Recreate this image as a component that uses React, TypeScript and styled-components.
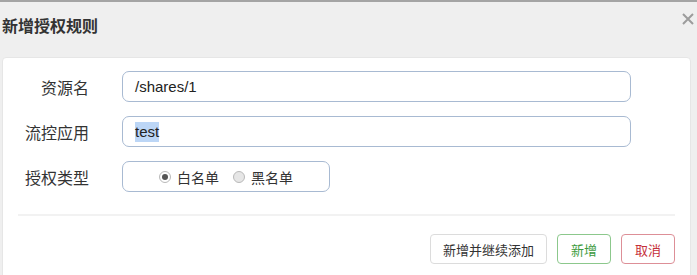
import React from "react";
import styled, { createGlobalStyle } from "styled-components";

const Global = createGlobalStyle`
  html, body { margin: 0; padding: 0; background: #efefef; }
  body { font-family: "Liberation Sans", "Noto Sans CJK SC", sans-serif; color: #333; }
`;

const Modal = styled.div`
  width: 697px;
  height: 275px;
  overflow: hidden;
  box-sizing: border-box;
  border-top: 2px solid #a4a4a4;
  background: #efefef;
`;

const Header = styled.div`
  height: 55px;
  display: flex;
  align-items: flex-start;
  justify-content: space-between;
  padding: 11px 3px 0 2px;
  box-sizing: border-box;
`;

const Title = styled.h4`
  margin: 0;
  font-size: 16px;
  line-height: 24px;
  font-weight: 600;
  color: #333;
  font-family: "Noto Sans CJK SC", sans-serif;
`;

const Close = styled.button`
  border: none;
  background: none;
  padding: 0;
  width: 12px;
  height: 12px;
  margin-top: 0;
  display: flex;
  cursor: pointer;
`;

const Panel = styled.div`
  margin-left: 2px;
  width: 689px;
  height: 240px;
  box-sizing: border-box;
  background: #fff;
  border: 1px solid #e6e6e6;
  border-radius: 4px;
  padding-top: 13px;
`;

const Row = styled.div`
  display: flex;
  align-items: center;
  margin-bottom: 14px;
`;

const Label = styled.label`
  width: 86px;
  text-align: right;
  font-family: "Noto Sans CJK SC", sans-serif;
  font-size: 16px;
  color: #333;
  margin-right: 33px;
`;

const Field = styled.div<{ $width: number; $center?: boolean }>`
  width: ${(p) => p.$width}px;
  height: 31px;
  box-sizing: border-box;
  border: 1px solid #a8bad2;
  border-radius: 7px;
  display: flex;
  align-items: center;
  justify-content: ${(p) => (p.$center ? "center" : "flex-start")};
  padding-left: ${(p) => (p.$center ? 0 : 12)}px;
  font-size: 15px;
  color: #222;
  background: #fff;
`;

const Selected = styled.span`
  background: #bcd6f6;
  line-height: 20px;
`;

const RadioItem = styled.span`
  display: inline-flex;
  align-items: center;
  font-family: "Noto Sans CJK SC", sans-serif;
  font-size: 14px;
  color: #333;
  & + & { margin-left: 14px; }
`;

const Dot = styled.span<{ $checked?: boolean }>`
  width: 12px;
  height: 12px;
  border-radius: 50%;
  box-sizing: border-box;
  border: 1px solid #b9b9b9;
  background: ${(p) => (p.$checked ? "#fff" : "#e6e6e6")};
  margin-right: 6px;
  display: inline-flex;
  align-items: center;
  justify-content: center;
  &::after {
    content: "";
    width: 6px;
    height: 6px;
    border-radius: 50%;
    background: ${(p) => (p.$checked ? "#555" : "transparent")};
  }
`;

const Divider = styled.div`
  margin: 22px 15px 0 15px;
  height: 2px;
  background: #f2f2f2;
`;

const Footer = styled.div`
  display: flex;
  justify-content: flex-end;
  gap: 10px;
  padding: 18px 15px 0 0;
`;

const Btn = styled.button<{ $tone: "default" | "ok" | "cancel" }>`
  height: 30px;
  padding: 0 12px;
  box-sizing: border-box;
  border-radius: 4px;
  background: #fff;
  font-family: "Noto Sans CJK SC", sans-serif;
  font-size: 13px;
  border: 1px solid
    ${(p) => (p.$tone === "ok" ? "#8cc88c" : p.$tone === "cancel" ? "#dd8f97" : "#dcdcdc")};
  color: ${(p) => (p.$tone === "ok" ? "#3d9b3d" : p.$tone === "cancel" ? "#c62f3a" : "#333")};
  min-width: 54px;
`;

export default function App() {
  return (
    <>
      <Global />
      <Modal>
        <Header>
          <Title>新增授权规则</Title>
          <Close aria-label="关闭">
            <svg width="12" height="12" viewBox="0 0 12 12">
              <path d="M1 1L11 11M11 1L1 11" stroke="#9c9c9c" strokeWidth="2" />
            </svg>
          </Close>
        </Header>
        <Panel>
          <Row>
            <Label>资源名</Label>
            <Field $width={509}>/shares/1</Field>
          </Row>
          <Row>
            <Label>流控应用</Label>
            <Field $width={509}>
              <Selected>test</Selected>
            </Field>
          </Row>
          <Row>
            <Label>授权类型</Label>
            <Field $width={208} $center>
              <RadioItem>
                <Dot $checked />
                白名单
              </RadioItem>
              <RadioItem>
                <Dot />
                黑名单
              </RadioItem>
            </Field>
          </Row>
          <Divider />
          <Footer>
            <Btn $tone="default">新增并继续添加</Btn>
            <Btn $tone="ok">新增</Btn>
            <Btn $tone="cancel">取消</Btn>
          </Footer>
        </Panel>
      </Modal>
    </>
  );
}
